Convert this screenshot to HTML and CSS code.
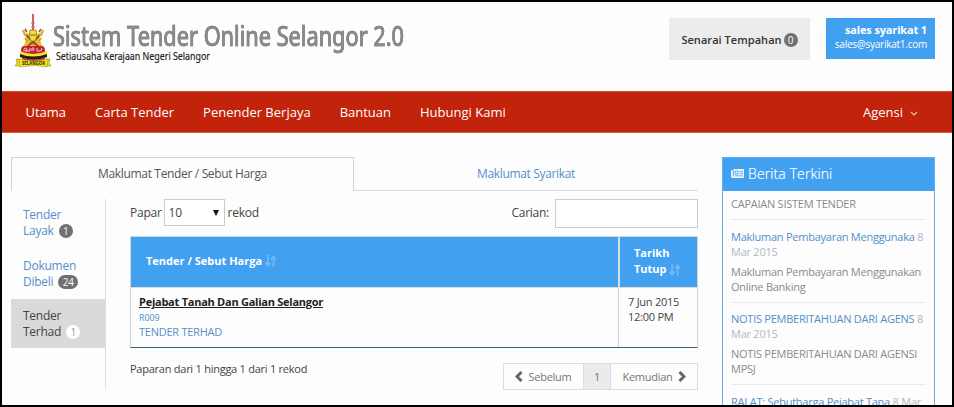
FILE: index.html
```html
<!DOCTYPE html>
<html lang="ms">
<head>
<meta charset="utf-8">
<title>Sistem Tender Online Selangor 2.0</title>
<link rel="stylesheet" href="styles.css">
</head>
<body>
<header class="header">
  <svg class="brand" width="400" height="60" viewBox="0 0 400 60" role="img" aria-label="Sistem Tender Online Selangor 2.0">
    <g class="crest">
      <path d="M20 1v18" stroke="#c94f55" stroke-width="1.8"/>
      <path d="M18 10h4M18 14h4" stroke="#bd7770" stroke-width="1"/>
      <path d="M14 22l6-3 6 3 2 8 3 5H9l3-5z" fill="#ddc92c"/>
      <path d="M13 22l14 13M27 22L13 35" stroke="#c63230" stroke-width="2"/>
      <path d="M10 17l2 5 3-1M30 17l-2 5-3-1M12 25l3 4M28 25l-3 4" fill="none" stroke="#c9b622" stroke-width="2.200"/>
      <path d="M12 16l2 3M28 16l-2 3" stroke="#cb3a35" stroke-width="1.500"/>
      <path d="M17 17h6l1 6-2 5h-4l-2-5z" fill="#efdf3c" stroke="#8c7b2b" stroke-width=".8"/>
      <path d="M17 22h6M16 31h8" stroke="#7c6b25" stroke-width="1"/>
      <rect x="8" y="33" width="24" height="8" rx="4" fill="#c3222c"/>
      <path d="M11 38v-2q2-2 3 0t-2 2h5v-3m2 3v-3q4 0 1 3m4-3v3h4q2-2 0-3" fill="none" stroke="#f2cdd0" stroke-width="1"/>
      <path d="M7 38q13 6 27 0v6q-13 6-27 0z" fill="#f3e62a"/>
      <path d="M7 41q13 5 27 0v3q-13 6-27 0z" fill="#242018"/>
      <path d="M9 44.500q12 4 23 0v2q-12 3-23 0z" fill="#d3322a"/>
      <path d="M7 46H3l1 4-2 3h6M33 46h4l-1 4 2 3h-6" fill="#e5d71e" stroke="#8c8219" stroke-width=".5"/>
      <path d="M6 46q15 4 29 0l-1 8q-13-3-27 0z" fill="#f4e71e" stroke="#948a20" stroke-width=".5"/>
      <text x="9" y="52" textLength="23" lengthAdjust="spacingAndGlyphs" class="crest-text">SELANGOR</text>
    </g>
    <text x="40" y="33" textLength="351" lengthAdjust="spacingAndGlyphs" class="brand-title">Sistem Tender Online Selangor 2.0</text>
    <text x="43" y="46.500" textLength="154" lengthAdjust="spacingAndGlyphs" class="brand-sub">Setiausaha Kerajaan Negeri Selangor</text>
  </svg>
  <div class="account">
    <a class="cart">Senarai Tempahan <span class="badge">0</span></a>
    <a class="user"><strong>sales syarikat 1</strong><span>sales@syarikat1.com</span></a>
  </div>
</header>
<nav class="nav">
  <a>Utama</a><a>Carta Tender</a><a>Penender Berjaya</a><a>Bantuan</a><a>Hubungi Kami</a>
  <a class="agency">Agensi <svg width="8" height="5" viewBox="0 0 8 5"><path d="M1 1l3 3 3-3" fill="none" stroke="#edb9ad" stroke-width="1.2"/></svg></a>
</nav>
<main class="content">
  <section class="main">
    <div class="tabs"><a class="tab active">Maklumat Tender / Sebut Harga</a><a class="tab">Maklumat Syarikat</a></div>
    <div class="panel">
      <aside class="side">
        <a>Tender<br>Layak <span class="badge">1</span></a>
        <a>Dokumen<br>Dibeli <span class="badge">24</span></a>
        <a class="selected">Tender<br>Terhad <span class="badge">1</span></a>
      </aside>
      <div class="records">
        <div class="filters">
          <span>Papar</span>
          <span class="select">10<svg width="6" height="6" viewBox="0 0 6 6"><path d="M0 0h6L3 6z" fill="#111"/></svg></span>
          <span>rekod</span>
          <label class="search">Carian:<input type="text"></label>
        </div>
        <div class="table">
          <div class="th">Tender / Sebut Harga <svg class="sort" viewBox="0 0 12 12"><path d="M3 0v10M.5 7.500L3 10.500l2.500-3M8.500 12V2M6 4.500L8.500 1.500 11 4.500"/></svg></div>
          <div class="th date-head"><span>Tarikh<br>Tutup <svg class="sort" viewBox="0 0 12 12"><path d="M3 0v10M.5 7.500L3 10.500l2.500-3M8.500 12V2M6 4.500L8.500 1.500 11 4.500"/></svg></span></div>
          <div class="td"><a class="agency-name">Pejabat Tanah Dan Galian Selangor</a><small>R009</small><a class="tender">TENDER TERHAD</a></div>
          <div class="td date">7 Jun 2015<br>12:00 PM</div>
        </div>
        <div class="footer">
          <span class="summary">Paparan dari 1 hingga 1 dari 1 rekod</span>
          <div class="pager">
            <a class="prev"><svg width="8" height="11" viewBox="0 0 8 11"><path d="M6.500 1L2 5.500 6.500 10"/></svg>Sebelum</a><a class="current">1</a><a class="next">Kemudian<svg width="8" height="11" viewBox="0 0 8 11"><path d="M1.500 1L6 5.500 1.500 10"/></svg></a>
          </div>
        </div>
      </div>
    </div>
  </section>
  <section class="news">
    <h2><svg width="13" height="9" viewBox="0 0 13 9"><path d="M2.500 0H13v9H1.500Q0 9 0 7.500V1.500h2.500z" fill="#e9f4fd"/><path d="M2.300 2v5.500M4 2h3v3H4zM8.500 2.500H12M8.500 4.500H12M4 6.800h8" fill="none" stroke="#42a0f1" stroke-width=".8"/></svg>Berita Terkini</h2>
    <div class="news-list">
      <article><p>CAPAIAN SISTEM TENDER</p></article>
      <article><div><a>Makluman Pembayaran Menggunaka</a> <time>8<br>Mar 2015</time></div><p>Makluman Pembayaran Menggunakan<br>Online Banking</p></article>
      <article><div><a>NOTIS PEMBERITAHUAN DARI AGENS</a> <time>8<br>Mar 2015</time></div><p>NOTIS PEMBERITAHUAN DARI AGENSI<br>MPSJ</p></article>
      <article><div><a>RALAT: Sebutharga Pejabat Tana</a> <time>8 Mar</time></div></article>
    </div>
  </section>
</main>
</body>
</html>
```
FILE: styles.css
```css
* { box-sizing: border-box; }
body { margin: 0; width: 954px; height: 407px; border: 2px solid #000; overflow: hidden; background: #fdfdfd; color: #444; font: 12px/16px "Open Sans", sans-serif; letter-spacing: -.25px; display: flex; flex-direction: column; }
a { color: #558fca; white-space: nowrap; }
svg { flex: none; }
.header { height: 89px; flex: none; display: flex; justify-content: space-between; padding: 11px 17px 0 11px; }
.brand { overflow: visible; letter-spacing: 0; }
.crest-text { font: bold 5px "Open Sans", sans-serif; fill: #29240e; }
.brand-title { font: 27px "Noto Sans", sans-serif; fill: #8b8b8b; stroke: #8b8b8b; stroke-width: .7; filter: drop-shadow(.6px .6px 0 #777); }
.brand-sub { font: 11.500px "Noto Sans", sans-serif; fill: #222; stroke: #222; stroke-width: .2; }
.account { display: flex; gap: 16px; padding-top: 5px; }
.badge { display: inline-block; min-width: 14px; height: 14px; border-radius: 7px; background: #707070; color: #fff; font-size: 10px; font-weight: 400; line-height: 14px; text-align: center; }
.cart { width: 141px; height: 42px; background: #ececec; color: #333; font-size: 11px; font-weight: 600; letter-spacing: .05px; padding-top: 2px; display: flex; align-items: center; justify-content: center; gap: 2px; }
.user { width: 109px; height: 41px; padding: 4px 8px 0 0; background: #42a0f1; color: #fff; display: flex; flex-direction: column; text-align: right; font-size: 10px; line-height: 15px; }
.user strong { font-size: 11px; letter-spacing: -.15px; }
.nav { height: 42px; flex: none; background: #c1240a; border-top: 1px solid #cf4c36; border-bottom: 1px solid #d85a45; display: flex; align-items: center; gap: 29px; padding: 0 34px 0 23.500px; letter-spacing: 0; }
.nav a { color: #fff; font-size: 13px; }
.nav .agency { margin-left: auto; display: flex; align-items: center; gap: 7px; }
.nav svg { margin-top: 3px; }
.content { display: flex; gap: 24px; padding: 24px 17px 0 9px; min-height: 0; flex: 1; }
.main { width: 687px; flex: none; }
.tabs { display: flex; height: 34px; letter-spacing: -.34px; }
.tab { flex: 1; text-align: center; line-height: 33px; border-bottom: 1px solid #dedede; }
.tab.active { flex: 0 0 343px; color: #555; border: 1px solid #d2d2d2; border-bottom: 0; line-height: 32px; }
.panel { display: flex; gap: 24px; padding-top: 8px; }
.side { width: 95px; flex: none; height: 190px; border-right: 1px solid #dcdcdc; display: flex; flex-direction: column; gap: 1px; }
.side a { height: 49px; padding: 8px 12px; }
.side a + a { padding-top: 9px; }
.side a .badge { margin-left: 2px; min-width: 14px; padding: 0 4.500px; }
.side .selected { background: #dadada; color: #444; }
.side .selected .badge { background: #fff; color: #7b9bb5; }
.records { flex: 1; min-width: 0; }
.filters { display: flex; align-items: flex-start; line-height: 27px; gap: 2px; height: 37px; }
.select { width: 61px; height: 27px; border: 1px solid #ccc; background: #fff; display: flex; align-items: center; justify-content: space-between; padding: 0 5px 0 4px; margin-right: 1px; }
.search { margin-left: auto; display: flex; gap: 6px; }
.search input { width: 143px; height: 29px; border: 1px solid #ccc; background: #fff; padding: 0; }
.table { display: grid; grid-template-columns: 487px 79px; grid-template-rows: 50px 60px; border: 1px solid #d5d5d5; border-bottom: 1px solid #36647c; height: 112px; }
.th { background: #42a0f1; color: #fff; font-weight: 700; font-size: 11px; letter-spacing: 0; padding: 0 15px 2px; display: flex; align-items: center; gap: 3px; }
.date-head { border-left: 2px solid #ddd; padding: 0 14px 2px; }
.sort { width: 12px; height: 12px; vertical-align: -3px; fill: none; stroke: #73b8f5; stroke-width: 1.800; }
.td { padding: 6px 8px; font-size: 11px; line-height: 15px; border-top: 1px solid #ddd; }
.td a, .td small { display: block; }
.td small { font-size: 9px; color: #558fca; letter-spacing: -.1px; padding-top: 1px; height: 15px; }
.td .agency-name { display: inline-block; color: #222; font-weight: 700; text-decoration: underline; }
.date { border-left: 1px solid #d5d5d5; padding-left: 9px; }
.footer { display: flex; justify-content: space-between; padding-top: 15px; }
.summary { font-size: 11px; line-height: 12px; }
.pager { display: flex; height: 27px; border: 1px solid #ddd; line-height: 25px; font-size: 11px; }
.pager a { color: #777; display: flex; align-items: center; justify-content: center; gap: 5px; }
.pager svg { fill: none; stroke: #666; stroke-width: 3; }
.prev { width: 79px; }
.current { width: 28px; background: #ebebeb; border: solid #ddd; border-width: 0 1px; }
.next { width: 86px; }
.news { width: 213px; height: 100%; border: 1px solid #62b0f3; border-bottom: 0; overflow: hidden; }
.news h2 { margin: 0; background: #42a0f1; color: #fff; height: 33px; font-size: 14px; font-weight: 300; letter-spacing: .12px; -webkit-text-stroke: .2px #fff; display: flex; align-items: center; gap: 4px; padding: 0 0 2px 8px; }
.news-list { padding: 0 8px; font-size: 11px; line-height: 15px; color: #858c90; white-space: nowrap; }
.news-list article { border-bottom: 1px solid #e8ebee; padding: 8.500px 0 8px; }
.news-list article:first-child { padding-top: 5px; }
.news-list p { margin: 5px 0 0; }
.news-list article:first-child p { margin: 0; }
.news-list time { color: #b4b8bb; }
```
